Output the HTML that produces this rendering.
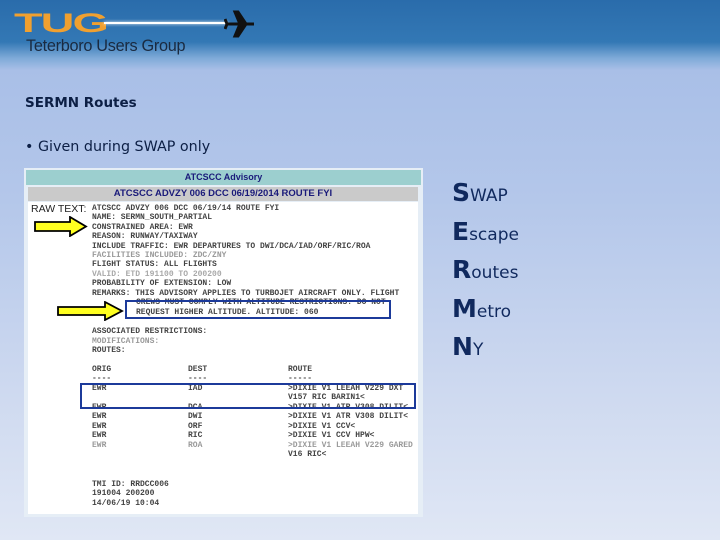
<!DOCTYPE html>
<html><head><style>
*{margin:0;padding:0;box-sizing:border-box}
body{width:720px;height:540px;overflow:hidden;position:relative;font-family:"DejaVu Sans","Liberation Sans",sans-serif;
background:linear-gradient(to bottom,#2a6cab 0px,#3378b5 42px,#7eaad8 58px,#a9bfe7 70px,#b4c7ea 200px,#cfdaf0 400px,#e0e7f5 540px)}
.abs{position:absolute;white-space:nowrap}
.m{font-family:"Liberation Mono","DejaVu Sans Mono",monospace;font-size:8px;color:#222;position:absolute;white-space:nowrap;letter-spacing:0;font-weight:bold;opacity:0.85}
.s{position:absolute;left:452px;color:#10295e;font-family:"DejaVu Sans","Liberation Sans",sans-serif;font-size:17px}
.s b{font-size:25px;font-weight:bold}
</style></head><body>
<!-- logo -->
<div class="abs" style="left:14px;top:11px;font:bold 24px 'Liberation Sans',sans-serif;color:#f0a030;line-height:24px;transform:scale(1.95,1.1);transform-origin:left top;letter-spacing:-1px">TUG</div>
<div class="abs" style="left:104px;top:22px;width:124px;height:2px;background:#fff;box-shadow:0 0 3px #fff"></div>
<svg class="abs" style="left:224px;top:9px" width="32" height="30" viewBox="0 0 32 30"><path d="M2 15 L30 15 M16 15 L11 3 L14 3 L22 15 L14 27 L11 27 Z M3 15 L1 10 M3 15 L1 20" stroke="#111" stroke-width="3" fill="#111"/></svg>
<div class="abs" style="left:26px;top:37px;font:16.3px 'Liberation Sans',sans-serif;color:#1a2a40;letter-spacing:-0.3px">Teterboro Users Group</div>

<div class="abs" style="left:25px;top:95px;font:bold 13.5px 'DejaVu Sans',sans-serif;color:#0c1f45">SERMN Routes</div>
<div class="abs" style="left:25px;top:139px;font:14.3px 'DejaVu Sans',sans-serif;color:#0c1f45">• Given during SWAP only</div>

<!-- screenshot -->
<div class="abs" style="left:24px;top:168px;width:399px;height:349px;background:#e6eef6"></div>
<div class="abs" style="left:26px;top:170px;width:395px;height:15px;background:#9ccfcf;font:bold 9px 'Liberation Sans',sans-serif;color:#1a1a7a;text-align:center;line-height:15px">ATCSCC Advisory</div>
<div class="abs" style="left:28px;top:187px;width:390px;height:14px;background:#cacaca;font:bold 9.5px 'Liberation Sans',sans-serif;color:#1a1a7a;text-align:center;line-height:14px">ATCSCC ADVZY 006 DCC 06/19/2014 ROUTE FYI</div>
<div class="abs" style="left:28px;top:202px;width:390px;height:312px;background:#fff"></div>
<div class="abs" style="left:31px;top:203px;font:10.5px 'Liberation Sans',sans-serif;color:#222">RAW TEXT:</div>
<div class="m" style="left:92px;top:204px">ATCSCC ADVZY 006 DCC 06/19/14 ROUTE FYI</div>
<div class="m" style="left:92px;top:213px">NAME: SERMN_SOUTH_PARTIAL</div>
<div class="m" style="left:92px;top:222.5px">CONSTRAINED AREA: EWR</div>
<div class="m" style="left:92px;top:232px">REASON: RUNWAY/TAXIWAY</div>
<div class="m" style="left:92px;top:241.5px">INCLUDE TRAFFIC: EWR DEPARTURES TO DWI/DCA/IAD/ORF/RIC/ROA</div>
<div class="m" style="left:92px;top:251px;color:#888">FACILITIES INCLUDED: ZDC/ZNY</div>
<div class="m" style="left:92px;top:260px">FLIGHT STATUS: ALL FLIGHTS</div>
<div class="m" style="left:92px;top:270px;color:#999">VALID: ETD 191100 TO 200200</div>
<div class="m" style="left:92px;top:279px">PROBABILITY OF EXTENSION: LOW</div>
<div class="m" style="left:92px;top:289px">REMARKS: THIS ADVISORY APPLIES TO TURBOJET AIRCRAFT ONLY. FLIGHT</div>
<div class="m" style="left:136px;top:298px">CREWS MUST COMPLY WITH ALTITUDE RESTRICTIONS. DO NOT</div>
<div class="m" style="left:136px;top:308px">REQUEST HIGHER ALTITUDE. ALTITUDE: 060</div>
<div class="m" style="left:92px;top:327px">ASSOCIATED RESTRICTIONS:</div>
<div class="m" style="left:92px;top:337px;color:#888">MODIFICATIONS:</div>
<div class="m" style="left:92px;top:346px">ROUTES:</div>
<div class="m" style="left:92px;top:365px">ORIG</div><div class="m" style="left:188px;top:365px">DEST</div><div class="m" style="left:288px;top:365px">ROUTE</div>
<div class="m" style="left:92px;top:374px">----</div><div class="m" style="left:188px;top:374px">----</div><div class="m" style="left:288px;top:374px">-----</div>
<div class="m" style="left:92px;top:384px">EWR</div><div class="m" style="left:188px;top:384px">IAD</div><div class="m" style="left:288px;top:384px">&gt;DIXIE V1 LEEAH V229 DXT</div>
<div class="m" style="left:288px;top:393px">V157 RIC BARIN1&lt;</div>
<div class="m" style="left:92px;top:403px">EWR</div><div class="m" style="left:188px;top:403px">DCA</div><div class="m" style="left:288px;top:403px">&gt;DIXIE V1 ATR V308 DILIT&lt;</div>
<div class="m" style="left:92px;top:412px">EWR</div><div class="m" style="left:188px;top:412px">DWI</div><div class="m" style="left:288px;top:412px">&gt;DIXIE V1 ATR V308 DILIT&lt;</div>
<div class="m" style="left:92px;top:422px">EWR</div><div class="m" style="left:188px;top:422px">ORF</div><div class="m" style="left:288px;top:422px">&gt;DIXIE V1 CCV&lt;</div>
<div class="m" style="left:92px;top:431px">EWR</div><div class="m" style="left:188px;top:431px">RIC</div><div class="m" style="left:288px;top:431px">&gt;DIXIE V1 CCV HPW&lt;</div>
<div class="m" style="left:92px;top:441px;color:#888">EWR</div><div class="m" style="left:188px;top:441px;color:#888">ROA</div><div class="m" style="left:288px;top:441px;color:#888">&gt;DIXIE V1 LEEAH V229 GARED</div>
<div class="m" style="left:288px;top:450px">V16 RIC&lt;</div>
<div class="m" style="left:92px;top:480px">TMI ID: RRDCC006</div>
<div class="m" style="left:92px;top:489px">191004 200200</div>
<div class="m" style="left:92px;top:499px">14/06/19 10:04</div>
<!-- boxes -->
<div class="abs" style="left:125px;top:300px;width:266px;height:19px;border:2px solid #1c3a9a"></div>
<div class="abs" style="left:80px;top:383px;width:336px;height:26px;border:2.5px solid #1c3a9a"></div>
<!-- arrows -->
<svg class="abs" style="left:34px;top:216px" width="54" height="21"><path d="M1 6 H36 V1 L52 10.5 L36 20 V15 H1 Z" fill="#ffff20" stroke="#000" stroke-width="1.8"/></svg>
<svg class="abs" style="left:57px;top:301px" width="67" height="20"><path d="M1 6 H48 V1 L65 10 L48 19 V14 H1 Z" fill="#ffff20" stroke="#000" stroke-width="1.8"/></svg>

<div class="s" style="top:178px"><b>S</b>WAP</div>
<div class="s" style="top:217px"><b>E</b>scape</div>
<div class="s" style="top:255px"><b>R</b>outes</div>
<div class="s" style="top:294px"><b>M</b>etro</div>
<div class="s" style="top:332px"><b>N</b>Y</div>
</body></html>
